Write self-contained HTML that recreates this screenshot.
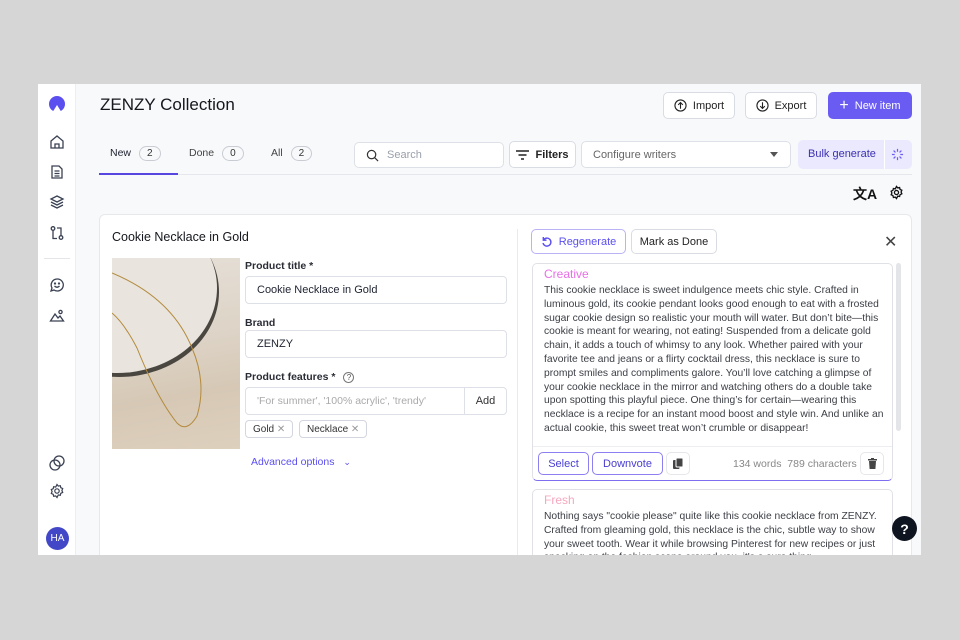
<!DOCTYPE html>
<html><head><meta charset="utf-8"><style>
*{box-sizing:border-box;margin:0;padding:0}
body{width:960px;height:640px;background:#d6d6d6;font-family:"Liberation Sans",sans-serif;position:relative;overflow:hidden;color:#1f2330}
.a{position:absolute}
.app{left:38px;top:84px;width:883px;height:471px;background:#f8f9fb;overflow:hidden}
.side{left:0;top:0;width:38px;height:471px;background:#fff;border-right:1px solid #eceef2}
.btn{position:absolute;background:#fff;border:1px solid #d9dce3;border-radius:5px;font-size:11px;display:flex;align-items:center;justify-content:center;gap:6px;color:#222}
.pill{display:inline-block;border:1px solid #c9ccd3;border-radius:9px;font-size:10px;padding:1px 7px;margin-left:8px;color:#333}
.lbl{font-size:10.5px;font-weight:bold;color:#2a2d36}
.inp{position:absolute;background:#fff;border:1px solid #dde0e6;border-radius:4px;font-size:11px;padding-left:11px;display:flex;align-items:center}
.txt{font-size:10.3px;line-height:13.8px;color:#3b3e45;white-space:nowrap}
.tag{position:absolute;height:18px;border:1px solid #d3d6de;border-radius:4px;font-size:10px;padding:3px 7px;color:#333;white-space:nowrap}
svg{display:block}
</style></head><body>
<div class="a app">
 <div class="a side">
  <svg class="a" style="left:10px;top:11px" width="18" height="18" viewBox="0 0 18 18"><circle cx="9" cy="9" r="8" fill="#5b4ff0"/><path d="M4 18 L9 10 L14 18Z" fill="#fff"/></svg>
  <svg class="a" style="left:11px;top:50px" width="16" height="16" viewBox="0 0 16 16" fill="none" stroke="#3a4152" stroke-width="1.3"><path d="M2 7 8 2l6 5v7H2z M6 14v-4h4v4"/></svg>
  <svg class="a" style="left:11px;top:80px" width="16" height="16" viewBox="0 0 16 16" fill="none" stroke="#3a4152" stroke-width="1.3"><path d="M3 2h7l3 3v9H3z M5.5 7h5M5.5 9.5h5M5.5 12h5"/></svg>
  <svg class="a" style="left:11px;top:110px" width="16" height="16" viewBox="0 0 16 16" fill="none" stroke="#3a4152" stroke-width="1.3"><path d="M8 2 14 5 8 8 2 5z M2 8l6 3 6-3 M2 11l6 3 6-3"/></svg>
  <svg class="a" style="left:11px;top:141px" width="16" height="16" viewBox="0 0 16 16" fill="none" stroke="#3a4152" stroke-width="1.3"><circle cx="4" cy="3.5" r="1.8"/><circle cx="12" cy="12.5" r="1.8"/><path d="M4 5.5v8h4 M12 10.5V3H8"/></svg>
  <div class="a" style="left:6px;top:174px;width:26px;height:1px;background:#e3e5ea"></div>
  <svg class="a" style="left:11px;top:193px" width="16" height="16" viewBox="0 0 16 16" fill="none" stroke="#3a4152" stroke-width="1.3"><path d="M8 2a6 6 0 1 1-3 11L2 14l1-3A6 6 0 0 1 8 2z M5.5 9q2.5 2.5 5 0"/><circle cx="6" cy="6.5" r=".5"/><circle cx="10" cy="6.5" r=".5"/></svg>
  <svg class="a" style="left:11px;top:224px" width="16" height="16" viewBox="0 0 16 16" fill="none" stroke="#3a4152" stroke-width="1.3"><path d="M1.5 13 6 6l3 4 2-2 3.5 5z"/><circle cx="11.5" cy="4" r="1.6"/></svg>
  <svg class="a" style="left:10px;top:370px" width="18" height="18" viewBox="0 0 18 18" fill="none" stroke="#3a4152" stroke-width="1.3"><circle cx="7" cy="11" r="5"/><circle cx="11" cy="7" r="5"/></svg>
  <svg class="a" style="left:11px;top:399px" width="16" height="16" viewBox="0 0 16 16" fill="none" stroke="#3a4152" stroke-width="1.2"><circle cx="8" cy="8" r="2.2"/><path d="M8 1.5l1.3 1.6 2-.4.5 2 1.9.9-.8 1.9.8 1.9-1.9.9-.5 2-2-.4L8 14.5l-1.3-1.6-2 .4-.5-2-1.9-.9.8-1.9-.8-1.9 1.9-.9.5-2 2 .4z"/></svg>
  <div class="a" style="left:8px;top:443px;width:23px;height:23px;border-radius:50%;background:#4147c7;color:#fff;font-size:10px;display:flex;align-items:center;justify-content:center">HA</div>
 </div>
 <div class="a" style="left:62px;top:11px;font-size:17px;color:#15171d">ZENZY Collection</div>
 <div class="btn" style="left:625px;top:8px;width:72px;height:27px"><svg width="13" height="13" viewBox="0 0 14 14" fill="none" stroke="#222" stroke-width="1.2"><circle cx="7" cy="7" r="6"/><path d="M7 10.5V4M4.5 6.3 7 3.8l2.5 2.5"/></svg>Import</div>
 <div class="btn" style="left:707px;top:8px;width:72px;height:27px"><svg width="13" height="13" viewBox="0 0 14 14" fill="none" stroke="#222" stroke-width="1.2"><circle cx="7" cy="7" r="6"/><path d="M7 3.5V10M4.5 7.7 7 10.2l2.5-2.5"/></svg>Export</div>
 <div class="btn" style="left:790px;top:8px;width:84px;height:27px;background:#6a5cf3;border-color:#6a5cf3;color:#fff"><span style="font-size:16px;line-height:10px">+</span>New item</div>
 <div class="a" style="left:72px;top:62px;font-size:10.5px">New<span class="pill">2</span></div>
 <div class="a" style="left:151px;top:62px;font-size:10.5px;color:#444">Done<span class="pill">0</span></div>
 <div class="a" style="left:233px;top:62px;font-size:10.5px;color:#444">All<span class="pill">2</span></div>
 <div class="a" style="left:61px;top:89px;width:79px;height:2px;background:#5846e0"></div>
 <div class="a" style="left:140px;top:90px;width:734px;height:1px;background:#e5e7ec"></div>
 <div class="inp" style="left:316px;top:58px;width:150px;height:26px;color:#9aa0aa;border-radius:5px"><svg width="13" height="13" viewBox="0 0 14 14" fill="none" stroke="#333" stroke-width="1.3"><circle cx="6" cy="6" r="4.5"/><path d="M9.5 9.5 13 13"/></svg><span style="margin-left:8px">Search</span></div>
 <div class="btn" style="left:471px;top:57px;width:67px;height:27px;font-weight:bold"><svg width="13" height="10" viewBox="0 0 13 10" stroke="#222" stroke-width="1.4"><path d="M0 1h13M2.5 5h8M5 9h3"/></svg>Filters</div>
 <div class="inp" style="left:543px;top:57px;width:210px;height:27px;color:#666;border-radius:5px">Configure writers<span style="position:absolute;right:12px;top:10px;border:4px solid transparent;border-top:5px solid #555"></span></div>
 <div class="a" style="left:760px;top:56px;width:114px;height:29px;background:#ebe9fd;border-radius:5px;color:#3b30b5;font-size:11px"><span class="a" style="left:10px;top:8px">Bulk generate</span><div class="a" style="left:86px;top:0;width:1px;height:29px;background:#fff"></div>
 <svg class="a" style="left:93px;top:8px" width="13" height="13" viewBox="0 0 14 14" stroke="#6a5cf3" stroke-width="1.3"><path d="M7 1v3M7 10v3M1 7h3M10 7h3M2.8 2.8l2 2M9.2 9.2l2 2M2.8 11.2l2-2M9.2 4.8l2-2"/></svg></div>
 <div class="a" style="left:815px;top:100px;font-size:14px;font-weight:bold;color:#111">文A</div>
 <svg class="a" style="left:851px;top:101px" width="15" height="15" viewBox="0 0 16 16" fill="none" stroke="#111" stroke-width="1.4"><circle cx="8" cy="8" r="2.2"/><path d="M8 1.5l1.3 1.6 2-.4.5 2 1.9.9-.8 1.9.8 1.9-1.9.9-.5 2-2-.4L8 14.5l-1.3-1.6-2 .4-.5-2-1.9-.9.8-1.9-.8-1.9 1.9-.9.5-2 2 .4z"/></svg>
 <div class="a" style="left:61px;top:130px;width:813px;height:360px;background:#fff;border:1px solid #e6e8ec;border-radius:6px">
  <div class="a" style="left:12px;top:15px;font-size:12.5px;color:#15171d">Cookie Necklace in Gold</div>
  <div class="a" style="left:12px;top:43px;width:128px;height:191px;background:linear-gradient(170deg,#e6e0d8 0%,#ddd3c6 45%,#d6c8b5 70%,#ddd0bd 100%);overflow:hidden">
   <div class="a" style="left:-95px;top:-55px;width:200px;height:170px;border-radius:50%;background:#e9e4dd;box-shadow:2px 4px 0 #4a4640"></div>
   <svg class="a" style="left:0;top:0" width="128" height="191" viewBox="0 0 128 191" fill="none" stroke="#b38a3c" stroke-width="1"><path d="M0 15 Q60 40 80 90 Q95 125 85 158 Q75 175 65 165 Q45 140 25 90 Q12 65 0 55"/></svg>
  </div>
  <div class="a lbl" style="left:145px;top:45px">Product title *</div>
  <div class="inp" style="left:145px;top:61px;width:262px;height:28px">Cookie Necklace in Gold</div>
  <div class="a lbl" style="left:145px;top:102px">Brand</div>
  <div class="inp" style="left:145px;top:115px;width:262px;height:28px">ZENZY</div>
  <div class="a lbl" style="left:145px;top:156px">Product features *<span style="display:inline-block;margin-left:8px;width:11px;height:11px;border:1px solid #777;border-radius:50%;font-size:8px;text-align:center;line-height:10px;font-weight:normal;color:#555">?</span></div>
  <div class="inp" style="left:145px;top:172px;width:262px;height:28px;color:#aaa;font-size:10.5px">'For summer', '100% acrylic', 'trendy'<div class="a" style="right:0;top:0;width:42px;height:26px;border-left:1px solid #dde0e6;color:#333;font-size:11px;display:flex;align-items:center;justify-content:center">Add</div></div>
  <div class="tag" style="left:145px;top:205px">Gold <span style="color:#999">✕</span></div>
  <div class="tag" style="left:199px;top:205px">Necklace <span style="color:#999">✕</span></div>
  <div class="a" style="left:151px;top:241px;font-size:10.5px;color:#5b4ff0">Advanced options <span style="margin-left:6px;font-size:9px">⌄</span></div>
  <div class="a" style="left:417px;top:14px;width:1px;height:346px;background:#e8eaee"></div>
  <div class="btn" style="left:431px;top:14px;width:95px;height:25px;border-color:#b9b2f6;color:#5b4ff0"><svg width="12" height="12" viewBox="0 0 12 12" fill="none" stroke="#5b4ff0" stroke-width="1.4"><path d="M2.5 4a4 4 0 1 1-.5 3M2.3 1v3.2h3.2"/></svg>Regenerate</div>
  <div class="btn" style="left:531px;top:14px;width:86px;height:25px">Mark as Done</div>
  <div class="a" style="left:784px;top:17px;font-size:16px;color:#444">✕</div>
  <div class="a" style="left:432px;top:48px;width:361px;height:218px;border:1px solid #dfe1e6;border-bottom:1.5px solid #7d6ff0;border-radius:5px">
   <div class="a" style="left:11px;top:3px;font-size:12px;color:#ea6ee8">Creative</div>
   <div class="a txt" style="left:11px;top:20px">This cookie necklace is sweet indulgence meets chic style. Crafted in<br>luminous gold, its cookie pendant looks good enough to eat with a frosted<br>sugar cookie design so realistic your mouth will water. But don’t bite—this<br>cookie is meant for wearing, not eating! Suspended from a delicate gold<br>chain, it adds a touch of whimsy to any look. Whether paired with your<br>favorite tee and jeans or a flirty cocktail dress, this necklace is sure to<br>prompt smiles and compliments galore. You’ll love catching a glimpse of<br>your cookie necklace in the mirror and watching others do a double take<br>upon spotting this playful piece. One thing’s for certain—wearing this<br>necklace is a recipe for an instant mood boost and style win. And unlike an<br>actual cookie, this sweet treat won’t crumble or disappear!</div>
   <div class="a" style="left:0;top:182px;width:359px;height:1px;background:#eceef1"></div>
   <div class="btn" style="left:5px;top:188px;width:51px;height:23px;border-color:#8c7ff2;color:#4a3fd0">Select</div>
   <div class="btn" style="left:59px;top:188px;width:71px;height:23px;border-color:#8c7ff2;color:#4a3fd0">Downvote</div>
   <div class="btn" style="left:133px;top:188px;width:24px;height:23px;border-color:#e6e7ea"><svg width="10" height="11" viewBox="0 0 10 11" fill="#444"><rect x="0" y="2" width="6.5" height="9" rx="1"/><rect x="3" y="0" width="7" height="9" rx="1" stroke="#fff" stroke-width="1"/></svg></div>
   <div class="a" style="left:200px;top:194px;font-size:10.5px;color:#888">134 words&nbsp; 789 characters</div>
   <div class="btn" style="left:327px;top:188px;width:24px;height:23px;border-color:#e6e7ea"><svg width="9" height="11" viewBox="0 0 9 11" fill="#444"><rect x="0" y="1" width="9" height="1.5"/><rect x="3" y="0" width="3" height="1"/><path d="M1 3h7l-.6 8H1.6z"/></svg></div>
  </div>
  <div class="a" style="left:796px;top:48px;width:5px;height:168px;background:#e4e5e8;border-radius:3px"></div>
  <div class="a" style="left:432px;top:274px;width:361px;height:100px;border:1px solid #dfe1e6;border-radius:5px">
   <div class="a" style="left:11px;top:3px;font-size:12px;color:#f6a8bf">Fresh</div>
   <div class="a txt" style="left:11px;top:20px">Nothing says "cookie please" quite like this cookie necklace from ZENZY.<br>Crafted from gleaming gold, this necklace is the chic, subtle way to show<br>your sweet tooth. Wear it while browsing Pinterest for new recipes or just<br>snacking on the fashion scene around you, it's a sure thing.</div>
  </div>
 </div>
 <div class="a" style="left:854px;top:432px;width:25px;height:25px;border-radius:50%;background:#0f1520;color:#fff;font-weight:bold;font-size:14px;display:flex;align-items:center;justify-content:center">?</div>
</div>
</body></html>
